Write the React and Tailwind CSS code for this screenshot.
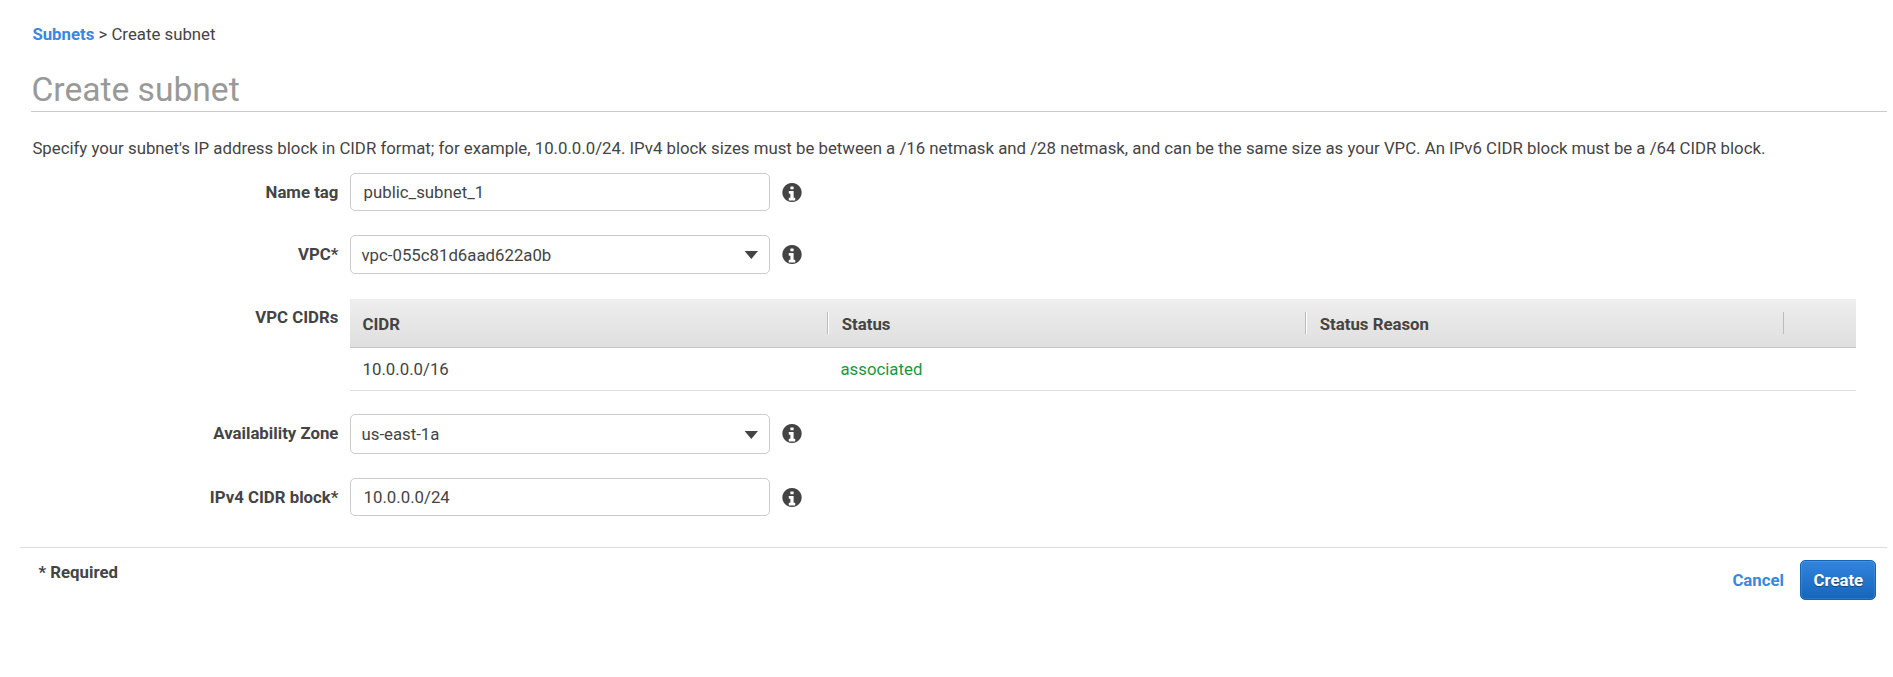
function InfoIcon({ nudge = "" }) {
  return (
    <svg
      viewBox="-24 0 1584 1536"
      preserveAspectRatio="none"
      className={`ml-3 h-[19px] w-5 shrink-0 fill-[#444] ${nudge}`}
      fillRule="evenodd"
    >
      <path d="M1024 1376v-160q0-14-9-23t-23-9h-96v-512q0-14-9-23t-23-9h-320q-14 0-23 9t-9 23v160q0 14 9 23t23 9h96v320h-96q-14 0-23 9t-9 23v160q0 14 9 23t23 9h448q14 0 23-9t9-23zM896 480v-160q0-14-9-23t-23-9h-192q-14 0-23 9t-9 23v160q0 14 9 23t23 9h192q14 0 23-9t9-23zM1536 768q0 209-103 385.5T1153.5 1433 768 1536 382.5 1433 103 1153.5 0 768 103 382.5 382.5 103 768 0 1153.5 103 1433 382.5 1536 768z" />
    </svg>
  );
}

function Label({ children, nudge = "" }) {
  return <div className={`mr-[11.6px] w-[307.4px] shrink-0 text-right font-bold ${nudge}`}>{children}</div>;
}

function TextRow({ label, value }) {
  return (
    <div className="flex h-[38px] items-center">
      <Label>{label}</Label>
      <input
        defaultValue={value}
        aria-label={label}
        className="h-[38px] w-[420px] rounded-[5px] border border-[#ccc] bg-white px-[12.6px] outline-none"
      />
      <InfoIcon nudge="mt-px" />
    </div>
  );
}

function SelectRow({ label, value, height, labelNudge, textNudge, iconNudge }) {
  return (
    <div className={`flex items-center ${height}`}>
      <Label nudge={labelNudge}>{label}</Label>
      <button
        type="button"
        className="flex h-full w-[420px] items-center justify-between rounded-[5px] border border-[#ccc] bg-white pr-[11px] pl-[10.5px] text-left"
      >
        <span className={textNudge}>{value}</span>
        <svg viewBox="0 0 14 8" className="mt-px h-2 w-[14px] fill-[#444]">
          <path d="M0.6 0H14L7.3 8z" />
        </svg>
      </button>
      <InfoIcon nudge={iconNudge} />
    </div>
  );
}

function Separator() {
  return <div className="h-[22px] w-[2px] shrink-0 border-r border-l border-r-white border-l-[#bbb]" />;
}

export default function App() {
  return (
    <div className="h-[677px] w-full overflow-hidden bg-white font-[Roboto,sans-serif] text-[16.8px] leading-6 text-[#444]">
      <div className="mr-[6px] ml-[31px]">
        <nav className="pt-[22px] pl-[1.4px]">
          <a className="font-bold text-[#3888e0]">Subnets</a> &gt; Create subnet
        </nav>
        <h1 className="mt-[22px] h-[44px] border-b border-[#ccc] pl-[0.5px] text-[33.6px] leading-[43px] text-[#999]">
          Create subnet
        </h1>
        <p className="mt-6 pl-[1.4px] whitespace-nowrap">
          Specify your subnet's IP address block in CIDR format; for example, 10.0.0.0/24. IPv4 block sizes must be
          between a /16 netmask and /28 netmask, and can be the same size as your VPC. An IPv6 CIDR block must be a /64
          CIDR block.
        </p>

        <div className="mt-[13px]">
          <TextRow label="Name tag" value="public_subnet_1" />
          <div className="h-6" />
          <SelectRow
            label="VPC*"
            value="vpc-055c81d6aad622a0b"
            height="h-[39px]"
            labelNudge="mb-px"
            textNudge="mt-px"
          />
          <div className="mt-[25px] flex">
            <div className="pt-[6px]">
              <Label>VPC CIDRs</Label>
            </div>
            <div className="mr-[31px] grow">
              <div className="flex h-[49px] items-center border-b border-[#c4c4c4] bg-linear-to-b from-[#eee] to-[#dfdfdf] font-bold">
                <div className="w-[477px] pt-[2px] pl-[12.5px]">CIDR</div>
                <Separator />
                <div className="w-[476px] pt-[2px] pl-[12.8px]">Status</div>
                <Separator />
                <div className="w-[476px] pt-[2px] pl-[12.8px]">Status Reason</div>
                <div className="h-[22px] w-px bg-[#bbb]" />
              </div>
              <div className="flex h-[43px] items-center border-b border-[#ddd]">
                <div className="w-[478px] pl-[12.6px]">10.0.0.0/16</div>
                <div className="pl-[12.5px] text-[#1a9641]">associated</div>
              </div>
            </div>
          </div>
          <div className="h-[23px]" />
          <SelectRow
            label="Availability Zone"
            value="us-east-1a"
            height="h-10"
            labelNudge="mb-[2px]"
            iconNudge="mb-px"
          />
          <div className="h-6" />
          <TextRow label="IPv4 CIDR block*" value="10.0.0.0/24" />
        </div>
      </div>

      <footer className="mt-[31px] mr-[6px] ml-5 flex justify-between border-t border-[#ddd] pt-3">
        <div className="pl-[18.5px] font-bold">* Required</div>
        <div className="flex items-center gap-4 pr-[11px]">
          <button type="button" className="font-bold text-[#3888e0]">
            Cancel
          </button>
          <button
            type="button"
            className="h-10 w-[76px] rounded-[5px] border border-[#1166bb] bg-linear-to-b from-[#3184dd] to-[#1566bb] pl-[0.6px] font-bold text-white inset-ring inset-ring-white/10 [text-shadow:0_1px_1px_rgba(0,0,0,0.4)]"
          >
            Create
          </button>
        </div>
      </footer>
    </div>
  );
}
